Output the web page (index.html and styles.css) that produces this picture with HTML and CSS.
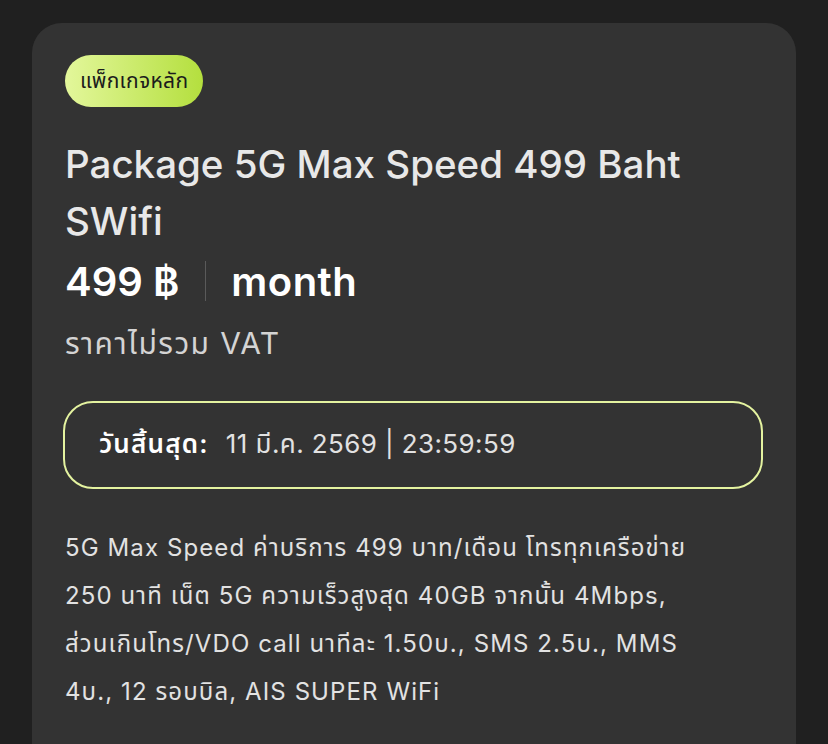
FILE: index.html
```html
<!DOCTYPE html>
<html lang="th">
<head>
<meta charset="UTF-8">
<meta name="viewport" content="width=device-width, initial-scale=1.0">
<title>Package 5G Max Speed</title>
<link rel="stylesheet" href="styles.css">
</head>
<body>

<!-- Карточка пакета -->
<div class="package-card">
    <span class="badge">แพ็กเกจหลัก</span>

    <h1 class="package-title">Package 5G Max Speed 499 Baht SWifi</h1>

    <div class="price-row">
        <span class="price">499 ฿</span>
        <span class="price-divider"></span>
        <span class="period">month</span>
    </div>
    <p class="vat-note">ราคาไม่รวม VAT</p>

    <div class="expiry-box">
        <strong>วันสิ้นสุด:</strong>
        <span>11 มี.ค. 2569 | 23:59:59</span>
    </div>

    <!-- переносы строк как в оригинале -->
    <p class="description">
        5G Max Speed ค่าบริการ 499 บาท/เดือน โทรทุกเครือข่าย<br>
        250 นาที เน็ต 5G ความเร็วสูงสุด 40GB จากนั้น 4Mbps,<br>
        ส่วนเกินโทร/VDO call นาทีละ 1.50บ., SMS 2.5บ., MMS<br>
        4บ., 12 รอบบิล, AIS SUPER WiFi
    </p>
</div>

</body>
</html>
```

FILE: styles.css
```css
body {
    margin: 0;
    background-color: #202020;
    font-family: Inter, "Noto Sans Thai", "Liberation Sans", "Noto Sans", sans-serif;
    color: #e6e6e6;
}

.package-card {
    background-color: #333333;
    margin: 23px 32px 0 32px;
    padding: 32px 33px 40px 33px;
    border-radius: 30px;
    min-height: 760px;
    box-sizing: border-box;
}

.badge {
    display: inline-block;
    padding: 0 15px;
    height: 52px;
    line-height: 52px;
    border-radius: 26px;
    background: linear-gradient(90deg, #e3f79b, #b4df3e);
    color: #1c1c1c;
    font-size: 21px;
    letter-spacing: 0.3px;
}

.package-title {
    margin: 29px 0 0 0;
    font-size: 38.5px;
    font-weight: 500;
    line-height: 57px;
    color: #e8e8e8;
}

.price-row {
    display: flex;
    align-items: center;
    height: 62px;
}

.price,
.period {
    font-size: 40px;
    font-weight: 600;
    color: #ffffff;
}

.period {
    letter-spacing: 0.5px;
}

.price-divider {
    width: 1px;
    height: 40px;
    background-color: #5a5a5a;
    margin: 0 25px 0 26px;
}

.vat-note {
    margin: 0;
    font-size: 30px;
    letter-spacing: 1.4px;
    line-height: 62px;
    color: #d4d4d4;
}

.expiry-box {
    margin: 27px 0 0 -2px;
    border: 2px solid #e4f3a0;
    border-radius: 30px;
    height: 88px;
    box-sizing: border-box;
    padding: 0 34px;
    display: flex;
    align-items: center;
    gap: 17px;
    font-size: 26px;
    letter-spacing: 0.4px;
    color: #e2e2e2;
}

.expiry-box strong {
    font-weight: 600;
    letter-spacing: 1.2px;
    color: #ffffff;
}

.description {
    margin: 35px 0 0 0;
    font-size: 24px;
    letter-spacing: 1.1px;
    line-height: 48px;
    color: #e2e2e2;
}
```
